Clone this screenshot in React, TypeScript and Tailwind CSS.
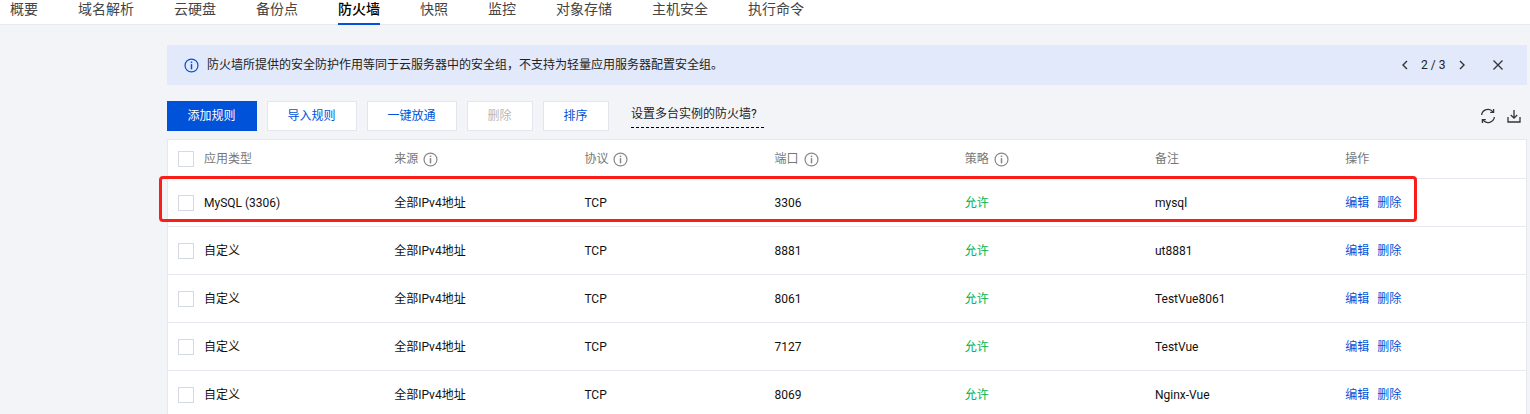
import React from "react";

const font = { fontFamily: '"Roboto","Noto Sans CJK SC",sans-serif' };
const nav = ["概要", "域名解析", "云硬盘", "备份点", "防火墙", "快照", "监控", "对象存储", "主机安全", "执行命令"];
const rows = [
  ["MySQL (3306)", "3306", "mysql"],
  ["自定义", "8881", "ut8881"],
  ["自定义", "8061", "TestVue8061"],
  ["自定义", "7127", "TestVue"],
  ["自定义", "8069", "Nginx-Vue"],
];

function Info({ cls = "text-[#888]", size = 15 }: { cls?: string; size?: number }) {
  return (
    <svg width={size} height={size} viewBox="0 0 16 16" fill="none" className={cls}>
      <circle cx="8" cy="8" r="6.9" stroke="currentColor" strokeWidth="1.3" />
      <rect x="7.2" y="3.8" width="1.6" height="1.6" fill="currentColor" />
      <rect x="7.2" y="6.5" width="1.6" height="5.6" fill="currentColor" />
    </svg>
  );
}

function Check() {
  return <span className="block w-4 h-4 bg-white border border-[#d5d9e3] shrink-0" />;
}

function Btn({ children, muted, w }: { children: string; muted?: boolean; w: string }) {
  return (
    <button className={`${w} h-[30px] pr-px bg-white border border-[#e3e6ef] text-xs ${muted ? "text-[#b8b8b8]" : "text-[#0052d9]"}`}>
      {children}
    </button>
  );
}

function Col({ children, last }: { children: React.ReactNode; last?: boolean }) {
  return <div className={`${last ? "flex-1" : "w-[190.2px]"} flex items-center gap-[5px] shrink-0`}>{children}</div>;
}

export default function App() {
  return (
    <div style={font} className="relative w-[1530px] h-[414px] overflow-hidden bg-[#f3f4f8] text-xs text-black">
      <nav className="h-[25px] bg-white border-b border-[#e8eaf0] flex gap-10 pl-[10px] text-sm leading-[19px] text-[#444]">
        {nav.map((n) => (
          <div
            key={n}
            className={`h-[25px] ${n === "防火墙" ? "border-b-2 border-[#0052d9] text-black font-medium" : ""}`}
          >
            {n}
          </div>
        ))}
      </nav>

      <main className="ml-[167px] w-[1360px] pt-5">
        <div className="h-10 bg-[#e1e9fb] flex items-center pl-[17px] text-[#222]">
          <Info cls="text-[#0052d9]" />
          <span className="ml-[8px] flex-1">防火墙所提供的安全防护作用等同于云服务器中的安全组，不支持为轻量应用服务器配置安全组。</span>
          <svg width="10" height="12" viewBox="0 0 10 12" fill="none" stroke="#333" strokeWidth="1.4" className="mr-[11px]"><path d="M7 2 3 6l4 4" /></svg>
          <span className="text-[#222] w-[24px] whitespace-nowrap">2 / 3</span>
          <svg width="10" height="12" viewBox="0 0 10 12" fill="none" stroke="#333" strokeWidth="1.4" className="ml-[12px]"><path d="M3 2l4 4-4 4" /></svg>
          <svg width="12" height="12" viewBox="0 0 12 12" fill="none" stroke="#333" strokeWidth="1.3" className="ml-[25px] mr-[23px]"><path d="M1.5 1.5l9 9M10.5 1.5l-9 9" /></svg>
        </div>

        <div className="h-[30px] mt-4 flex items-center">
          <button className="h-[30px] w-[90px] pr-px bg-[#0052d9] text-white text-xs">添加规则</button>
          <div className="ml-[10px] flex gap-[10px]">
            <Btn w="w-[90px]">导入规则</Btn>
            <Btn w="w-[90px]">一键放通</Btn>
            <Btn w="w-[66px]" muted>删除</Btn>
            <Btn w="w-[66px]">排序</Btn>
          </div>
          <span className="ml-[22px] h-[24px] leading-[21px] border-b border-dashed border-black text-[#222] w-[133px] whitespace-nowrap">设置多台实例的防火墙?</span>
          <div className="ml-auto mr-[6px] flex items-center gap-[11px] text-[#333]">
            <svg width="16" height="16" viewBox="0 0 16 16" fill="none" stroke="currentColor" strokeWidth="1.3">
              <path d="M1.6 7A6.5 6.5 0 0 1 13 3.8" />
              <path d="M13.6 1v3.4h-3.4" />
              <path d="M14.4 9A6.5 6.5 0 0 1 3 12.2" />
              <path d="M2.4 15v-3.4h3.4" />
            </svg>
            <svg width="14" height="14" viewBox="0 0 14 14" fill="none" stroke="currentColor" strokeWidth="1.3">
              <path d="M7 1v8M3.8 6 7 9.2 10.2 6" />
              <path d="M1 8v5h12V8" />
            </svg>
          </div>
        </div>

        <section className="mt-2 w-[1360px] bg-white border border-[#e6e8f0] border-b-0">
          <div className="h-[38px] flex items-center pl-[10px] text-[#777]">
            <Check />
            <div className="flex ml-[10px] flex-1">
              <Col>应用类型</Col>
              <Col>来源<Info /></Col>
              <Col>协议<Info /></Col>
              <Col>端口<Info /></Col>
              <Col>策略<Info /></Col>
              <Col>备注</Col>
              <Col last>操作</Col>
            </div>
          </div>
          {rows.map((r) => (
            <div key={r[1]} className="h-12 flex items-center pl-[10px] border-t border-[#e8e9f2]">
              <Check />
              <div className="flex ml-[10px] flex-1 text-[#111]">
                <Col>{r[0]}</Col>
                <Col>全部IPv4地址</Col>
                <Col>TCP</Col>
                <Col>{r[1]}</Col>
                <Col><span className="text-[#00b34a]">允许</span></Col>
                <Col>{r[2]}</Col>
                <Col last><span className="text-[#0052d9] flex gap-2"><span>编辑</span><span>删除</span></span></Col>
              </div>
            </div>
          ))}
        </section>
      </main>

      <div className="absolute left-[159px] top-[176px] w-[1258px] h-[46px] border-[3px] border-[#fa1e1a] rounded-[4px] pointer-events-none" />
    </div>
  );
}
